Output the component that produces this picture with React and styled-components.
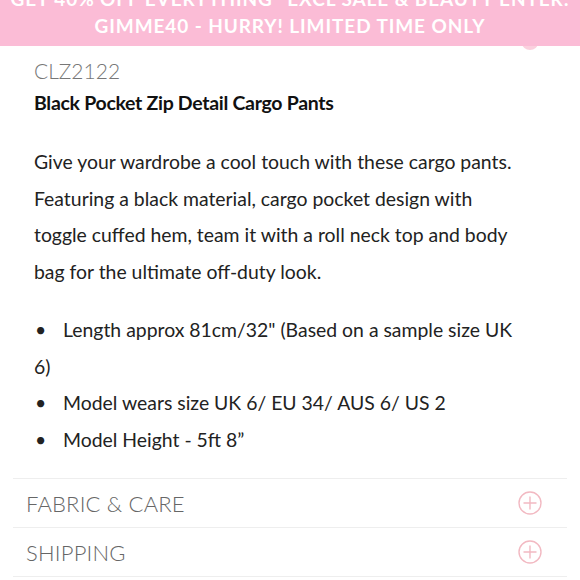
import React from "react";
import styled, { createGlobalStyle } from "styled-components";

const Global = createGlobalStyle`
  html, body { margin: 0; padding: 0; background: #fff; }
  body { font-family: Lato, "Liberation Sans", sans-serif; }
`;

const Page = styled.div`
  position: relative;
  width: 580px;
  height: 580px;
  overflow: hidden;
  background: #fff;
`;

const Banner = styled.div`
  position: relative;
  z-index: 2;
  height: 46px;
  overflow: hidden;
  background: #fbbcd6;
  color: #fff;
  text-align: center;
  font-family: Lato, sans-serif;
  font-weight: 700;
  font-size: 19px;
  line-height: 27px;
  letter-spacing: 0.9px;
`;

const BannerText = styled.div`
  margin-top: -15px;
  white-space: nowrap;
`;

const Bubble = styled.div`
  position: absolute;
  z-index: 1;
  left: 522px;
  top: 36px;
  width: 16px;
  height: 14px;
  border-radius: 50%;
  background: #fbd0de;
`;

const Content = styled.div`
  padding: 0 58px 0 34px;
`;

const Code = styled.div`
  margin-top: 12px;
  font-size: 21px;
  font-weight: 300;
  color: #777;
  line-height: 26px;
`;

const Title = styled.h1`
  margin: 6px 0 0;
  font-size: 19.5px;
  font-weight: 700;
  color: #111;
  line-height: 26px;
  letter-spacing: -0.3px;
  white-space: nowrap;
`;

const Paragraph = styled.p`
  margin: 28px 0 0;
  font-size: 19.4px;
  font-weight: 400;
  color: #222;
  line-height: 36.5px;
  white-space: nowrap;
`;

const List = styled.ul`
  margin: 22px 0 0;
  padding: 0;
  list-style: none;
  font-size: 19.4px;
  color: #222;
  line-height: 36.5px;
`;

const Item = styled.li`
  &::before {
    content: "•";
    display: inline-block;
    width: 28px;
    padding-left: 1px;
  }
`;

const Accordion = styled.div`
  margin: 20px 13px 0;
`;

const Row = styled.div`
  display: flex;
  align-items: center;
  justify-content: space-between;
  height: 48px;
  border-top: 1px solid #eeeeee;
  padding: 0 25px 0 13px;
  &:last-child { border-bottom: 1px solid #eeeeee; }
`;

const RowLabel = styled.span`
  font-size: 22px;
  font-weight: 300;
  color: #666;
  letter-spacing: 0.2px;
`;

const Plus = () => (
  <svg width="24" height="24" viewBox="0 0 24 24" fill="none" stroke="#f2b9c2" strokeWidth="1.4">
    <circle cx="12" cy="12" r="11" />
    <path d="M12 5.5v13M5.5 12h13" />
  </svg>
);

export default function App() {
  return (
    <Page>
      <Global />
      <Banner>
        <BannerText>
          GET 40% OFF EVERYTHING* EXCL SALE &amp; BEAUTY ENTER:
          <br />
          GIMME40 - HURRY! LIMITED TIME ONLY
        </BannerText>
      </Banner>
      <Bubble />
      <Content>
        <Code>CLZ2122</Code>
        <Title>Black Pocket Zip Detail Cargo Pants</Title>
        <Paragraph>
          Give your wardrobe a cool touch with these cargo pants.
          <br />
          Featuring a black material, cargo pocket design with
          <br />
          toggle cuffed hem, team it with a roll neck top and body
          <br />
          bag for the ultimate off-duty look.
        </Paragraph>
        <List>
          <Item>Length approx 81cm/32" (Based on a sample size UK 6)</Item>
          <Item>Model wears size UK 6/ EU 34/ AUS 6/ US 2</Item>
          <Item>Model Height - 5ft 8”</Item>
        </List>
      </Content>
      <Accordion>
        <Row>
          <RowLabel>FABRIC &amp; CARE</RowLabel>
          <Plus />
        </Row>
        <Row>
          <RowLabel>SHIPPING</RowLabel>
          <Plus />
        </Row>
      </Accordion>
    </Page>
  );
}
